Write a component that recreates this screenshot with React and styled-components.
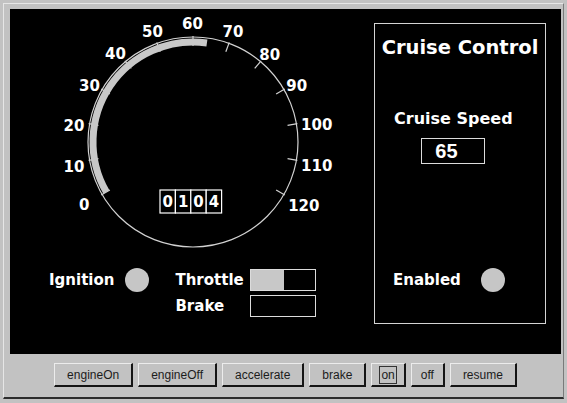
import React from 'react'
import styled, { createGlobalStyle } from 'styled-components'

const GlobalStyle = createGlobalStyle`
  html, body {
    margin: 0;
    padding: 0;
    background: #c2c2c2;
  }
`

const Window = styled.div`
  width: 567px;
  height: 403px;
  box-sizing: border-box;
  padding: 3px;
  background: #c2c2c2;
  overflow: hidden;
`

const Frame = styled.div`
  height: 396px;
  box-sizing: border-box;
  border-top: 1px solid #e6e6e6;
  border-left: 1px solid #e6e6e6;
  border-right: 1px solid #7a7a7a;
  border-bottom: 2px solid #2c2c2c;
  padding: 5px 0 0 6px;
`

const Panel = styled.div`
  width: 551px;
  height: 345px;
  background: #000;
  display: flex;
  font-family: "DejaVu Sans", sans-serif;
  font-weight: bold;
  color: #fff;
`

const LeftCol = styled.div`
  width: 350px;
  display: flex;
  flex-direction: column;
`

const Gauge = styled.svg`
  display: block;
  font-family: "DejaVu Sans", sans-serif;
  font-weight: bold;
`

const ControlsRow = styled.div`
  display: flex;
  align-items: flex-start;
  margin-top: 10px;
  padding-left: 39px;
`

const LampGroup = styled.div`
  display: flex;
  align-items: center;
  gap: ${(props) => props.gap || 11}px;
  height: 22px;
`

const Label = styled.span`
  font-size: 15px;
  line-height: 22px;
  white-space: nowrap;
`

const Lamp = styled.div`
  width: 24px;
  height: 24px;
  border-radius: 50%;
  background: ${(props) => (props.on ? '#f0f0f0' : '#c6c6c6')};
`

const PedalGrid = styled.div`
  display: grid;
  grid-template-columns: auto 66px;
  column-gap: 6px;
  row-gap: 4px;
  margin-left: 26px;
`

const Bar = styled.div`
  width: 66px;
  height: 22px;
  box-sizing: border-box;
  border: 1px solid #dcdcdc;
  background: #000;
`

const BarFill = styled.div`
  height: 100%;
  background: #c8c8c8;
`

const CruiseBox = styled.div`
  width: 172px;
  height: 301px;
  margin: 14px 0 0 14px;
  box-sizing: border-box;
  border: 1px solid #d4d4d4;
  display: flex;
  flex-direction: column;
  padding-top: 12px;
`

const Title = styled.div`
  font-size: 19.5px;
  line-height: 24px;
  text-align: center;
  white-space: nowrap;
`

const SpeedBlock = styled.div`
  display: flex;
  flex-direction: column;
  align-items: center;
  align-self: flex-start;
  margin: 49px 0 0 19px;
  gap: 9px;
`

const SpeedLabel = styled.div`
  font-size: 16px;
  line-height: 20px;
  white-space: nowrap;
`

const SpeedField = styled.div`
  width: 64px;
  height: 26px;
  box-sizing: border-box;
  border: 1px solid #dcdcdc;
  padding-left: 13px;
  font-family: "Liberation Sans", Arial, sans-serif;
  font-size: 20px;
  line-height: 24px;
`

const EnabledRow = styled.div`
  margin-top: auto;
  padding: 0 0 32px 18px;
`

const ButtonBar = styled.div`
  display: flex;
  justify-content: center;
  gap: 5px;
  width: 551px;
  padding-top: 9px;
`

const Button = styled.button`
  height: 24px;
  padding: 0 ${(props) => (props.compact ? 9 : 12)}px;
  background: #c2c2c2;
  border-top: 1px solid #ececec;
  border-left: 1px solid #ececec;
  border-right: 2px solid #141414;
  border-bottom: 2px solid #141414;
  font-family: "Liberation Sans", Arial, sans-serif;
  font-size: 12px;
  color: #1c1c1c;
  cursor: pointer;
`

const FocusText = styled.span`
  outline: ${(props) => (props.focused ? '1px solid #333' : 'none')};
  outline-offset: 1px;
`

const CX = 183
const CY = 133
const R = 105

const labels = [
  [0, 74.3, 195.5],
  [10, 64, 157.7],
  [20, 64, 116.5],
  [30, 79.5, 76.3],
  [40, 105.5, 44],
  [50, 142.5, 22.3],
  [60, 182.5, 14.8],
  [70, 223, 22.3],
  [80, 259.7, 45.7],
  [90, 286.7, 76.5],
  [100, 306.7, 115.8],
  [110, 306.7, 156.8],
  [120, 293.8, 196],
]

// value -> angle in degrees (maths orientation), 0 at lower left, 120 at lower right
const angleOf = (v) => 210 - v * 2
const pt = (deg, r) => {
  const a = (deg * Math.PI) / 180
  return [CX + r * Math.cos(a), CY - r * Math.sin(a)]
}

function Speedometer({ speed, odometer }) {
  const [sx, sy] = pt(angleOf(0), 100)
  const [ex, ey] = pt(angleOf(speed), 100)
  const large = angleOf(0) - angleOf(speed) > 180 ? 1 : 0
  const digits = odometer.split('')
  return (
    <Gauge width="350" height="250" viewBox="0 0 350 250">
      <circle cx={CX} cy={CY} r={R} fill="none" stroke="#d2d2d2" strokeWidth="1.2" />
      {labels.map(([v]) => {
        const [x1, y1] = pt(angleOf(v), 96)
        const [x2, y2] = pt(angleOf(v), 106)
        return <line key={'t' + v} x1={x1} y1={y1} x2={x2} y2={y2} stroke="#d2d2d2" strokeWidth="1.2" />
      })}
      <path
        d={`M ${sx} ${sy} A 100 100 0 ${large} 1 ${ex} ${ey}`}
        fill="none"
        stroke="#c8c8c8"
        strokeWidth="7"
      />
      {labels.map(([v, x, y]) => (
        <text key={v} x={x} y={y + 5.5} fill="#fff" fontSize="15" textAnchor="middle">
          {v}
        </text>
      ))}
      {digits.map((d, i) => (
        <g key={i}>
          <rect x={150 + i * 15.4} y="181" width="15.4" height="23" fill="#000" stroke="#fff" strokeWidth="1.2" />
          <text x={157.7 + i * 15.4} y="198" fill="#fff" fontSize="15" textAnchor="middle">
            {d}
          </text>
        </g>
      ))}
    </Gauge>
  )
}

const buttons = [
  { name: 'engineOn' },
  { name: 'engineOff' },
  { name: 'accelerate' },
  { name: 'brake' },
  { name: 'on', compact: true, focused: true },
  { name: 'off', compact: true },
  { name: 'resume' },
]

export default function App() {
  const throttle = 0.52
  const brake = 0
  return (
    <>
      <GlobalStyle />
      <Window>
        <Frame>
          <Panel>
            <LeftCol>
              <Speedometer speed={64} odometer="0104" />
              <ControlsRow>
                <LampGroup>
                  <Label>Ignition</Label>
                  <Lamp />
                </LampGroup>
                <PedalGrid>
                  <Label>Throttle</Label>
                  <Bar>
                    <BarFill style={{ width: `${throttle * 100}%` }} />
                  </Bar>
                  <Label>Brake</Label>
                  <Bar>
                    <BarFill style={{ width: `${brake * 100}%` }} />
                  </Bar>
                </PedalGrid>
              </ControlsRow>
            </LeftCol>
            <CruiseBox>
              <Title>Cruise Control</Title>
              <SpeedBlock>
                <SpeedLabel>Cruise Speed</SpeedLabel>
                <SpeedField>65</SpeedField>
              </SpeedBlock>
              <EnabledRow>
                <LampGroup gap={20}>
                  <Label>Enabled</Label>
                  <Lamp />
                </LampGroup>
              </EnabledRow>
            </CruiseBox>
          </Panel>
          <ButtonBar>
            {buttons.map((b) => (
              <Button key={b.name} compact={b.compact}>
                <FocusText focused={b.focused}>{b.name}</FocusText>
              </Button>
            ))}
          </ButtonBar>
        </Frame>
      </Window>
    </>
  )
}
